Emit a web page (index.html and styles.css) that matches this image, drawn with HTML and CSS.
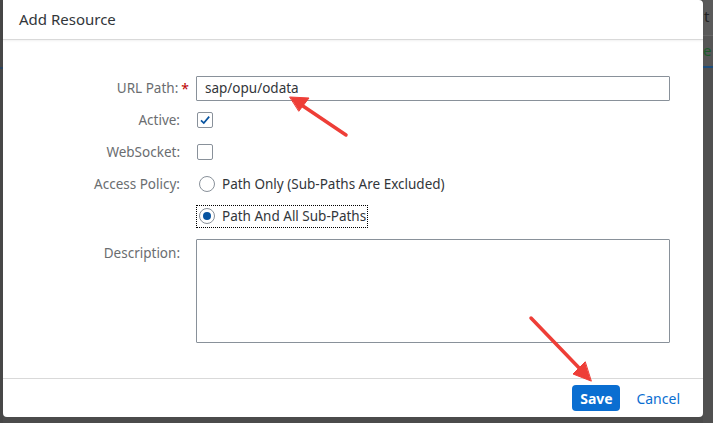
FILE: index.html
```html
<!DOCTYPE html>
<html>
<head>
<meta charset="utf-8">
<link rel="stylesheet" href="styles.css">
</head>
<body>
<div class="screen">
  <div class="left-strip"><div class="strip-line"></div></div>
  <div class="dialog">
    <div class="header"><span class="title">Add Resource</span></div>
    <div class="content">
      <div class="form">
        <div class="label">URL Path:<span class="req">*</span></div>
        <div class="field"><div class="input">sap/opu/odata</div></div>

        <div class="label">Active:</div>
        <div class="field"><span class="checkbox checked"><svg width="12" height="12" viewBox="0 0 12 12"><path d="M2 6.3 L4.8 9 L10.2 2.6" fill="none" stroke="#0854a0" stroke-width="1.7"/></svg></span></div>

        <div class="label">WebSocket:</div>
        <div class="field"><span class="checkbox"></span></div>

        <div class="label">Access Policy:</div>
        <div class="field"><span class="radio-opt"><span class="radio"></span><span class="opt-text">Path Only (Sub-Paths Are Excluded)</span></span></div>

        <div class="label"></div>
        <div class="field"><span class="radio-opt focused"><span class="radio selected"></span><span class="opt-text">Path And All Sub-Paths</span></span></div>

        <div class="label top">Description:</div>
        <div class="field top"><div class="textarea"></div></div>
      </div>
    </div>
    <div class="footer">
      <button class="btn-save">Save</button>
      <button class="btn-cancel">Cancel</button>
    </div>
    <svg class="annot" width="700" height="417" viewBox="0 0 700 417">
      <g fill="#ee3e37" stroke="#ee3e37" stroke-linecap="round">
        <line x1="343" y1="135" x2="294" y2="102" stroke-width="3.5"/>
        <polygon points="287,97 306,98 296,111" stroke-width="1" stroke-linejoin="round"/>
        <line x1="528" y1="318" x2="580" y2="372" stroke-width="3.5"/>
        <polygon points="588,381 570,374 582,362" stroke-width="1" stroke-linejoin="round"/>
      </g>
    </svg>
  </div>
  <div class="right-strip">
    <div class="rs-top"><span class="rs-t">t</span></div>
    <div class="rs-mid"><span class="rs-e">e</span></div>
    <div class="rs-bottom"></div>
  </div>
</div>
</body>
</html>
```
FILE: styles.css
```css
* { box-sizing: border-box; }
html, body { margin: 0; padding: 0; }
body {
  width: 713px;
  height: 423px;
  overflow: hidden;
  background: #4b4b4b;
  font-family: "Noto Sans", "Liberation Sans", Arial, sans-serif;
}
.screen {
  display: grid;
  grid-template-columns: 3px 700px 10px;
  height: 423px;
}
.left-strip {
  background: #474747;
  position: relative;
}
.strip-line {
  margin-top: 67px;
  height: 2px;
  background: #2b4460;
}
.dialog {
  position: relative;
  height: 417px;
  background: #fff;
  border-radius: 0 4px 4px 4px;
  display: flex;
  flex-direction: column;
}
.header {
  height: 40px;
  border-bottom: 1px solid #d9d9d9;
  box-shadow: 0 1px 2px rgba(0,0,0,0.06);
  display: flex;
  align-items: center;
  padding-left: 16px;
  padding-bottom: 1px;
}
.title {
  font-size: 15px;
  color: #32363a;
}
.content {
  flex: 1;
  padding-top: 32px;
  padding-right: 33px;
}
.form {
  display: grid;
  grid-template-columns: 177px 1fr;
  grid-auto-rows: 32px;
  column-gap: 16px;
}
.label {
  font-size: 13.5px;
  color: #6a6d70;
  text-align: right;
  display: flex;
  align-items: center;
  justify-content: flex-end;
}
.req {
  color: #bb0000;
  margin-left: 3px;
  margin-right: -9px;
  font-size: 14px;
}
.field {
  display: flex;
  align-items: center;
}
.input {
  width: 100%;
  height: 25px;
  border: 1px solid #89919a;
  border-radius: 1px;
  font-size: 13.5px;
  color: #32363a;
  padding-left: 8px;
  display: flex;
  align-items: center;
}
.checkbox {
  width: 16px;
  height: 16px;
  border: 1px solid #89919a;
  border-radius: 2px;
  margin-left: 1px;
  display: flex;
  align-items: center;
  justify-content: center;
}
.radio-opt {
  display: flex;
  align-items: center;
  height: 23px;
  padding: 0 1px 0 2px;
  border: 1px dotted transparent;
}
.radio-opt.focused {
  border-color: #000;
}
.radio {
  width: 16px;
  height: 16px;
  border: 1px solid #89919a;
  border-radius: 50%;
  display: flex;
  align-items: center;
  justify-content: center;
}
.radio.selected::after {
  content: "";
  width: 8px;
  height: 8px;
  border-radius: 50%;
  background: #0854a0;
}
.opt-text {
  margin-left: 7px;
  font-size: 13.5px;
  color: #32363a;
}
.label.top {
  align-items: flex-start;
  padding-top: 5px;
  margin-top: 7px;
}
.field.top {
  align-items: flex-start;
  margin-top: 7px;
}
.textarea {
  width: 100%;
  height: 104px;
  border: 1px solid #89919a;
  border-radius: 1px;
}
.footer {
  height: 39px;
  border-top: 1px solid #d9d9d9;
  display: flex;
  align-items: center;
  justify-content: flex-end;
  padding-right: 15px;
  gap: 8px;
}
.btn-save {
  font-family: inherit;
  height: 26px;
  width: 48px;
  padding: 0;
  background: #0a6ed1;
  color: #fff;
  font-weight: bold;
  font-size: 14px;
  border: none;
  border-radius: 4px;
}
.btn-cancel {
  font-family: inherit;
  height: 26px;
  padding: 0 8px;
  background: none;
  border: none;
  color: #0a6ed1;
  font-size: 14px;
}
.annot {
  position: absolute;
  left: 0;
  top: 0;
  pointer-events: none;
}
.right-strip {
  display: flex;
  flex-direction: column;
  background: #505050;
}
.rs-top {
  height: 36px;
  background: #5a5a5a;
  border-bottom: 1px solid #666;
  font-size: 15px;
  color: #222;
  padding-top: 8px;
  padding-left: 1px;
  line-height: 16px;
}
.rs-mid {
  height: 32px;
  background: #565656;
  border-bottom: 2px solid #1c4e7e;
  font-size: 15px;
  color: #1c5b2a;
  padding-top: 6px;
  line-height: 16px;
}
.rs-bottom {
  flex: 1;
}
```
